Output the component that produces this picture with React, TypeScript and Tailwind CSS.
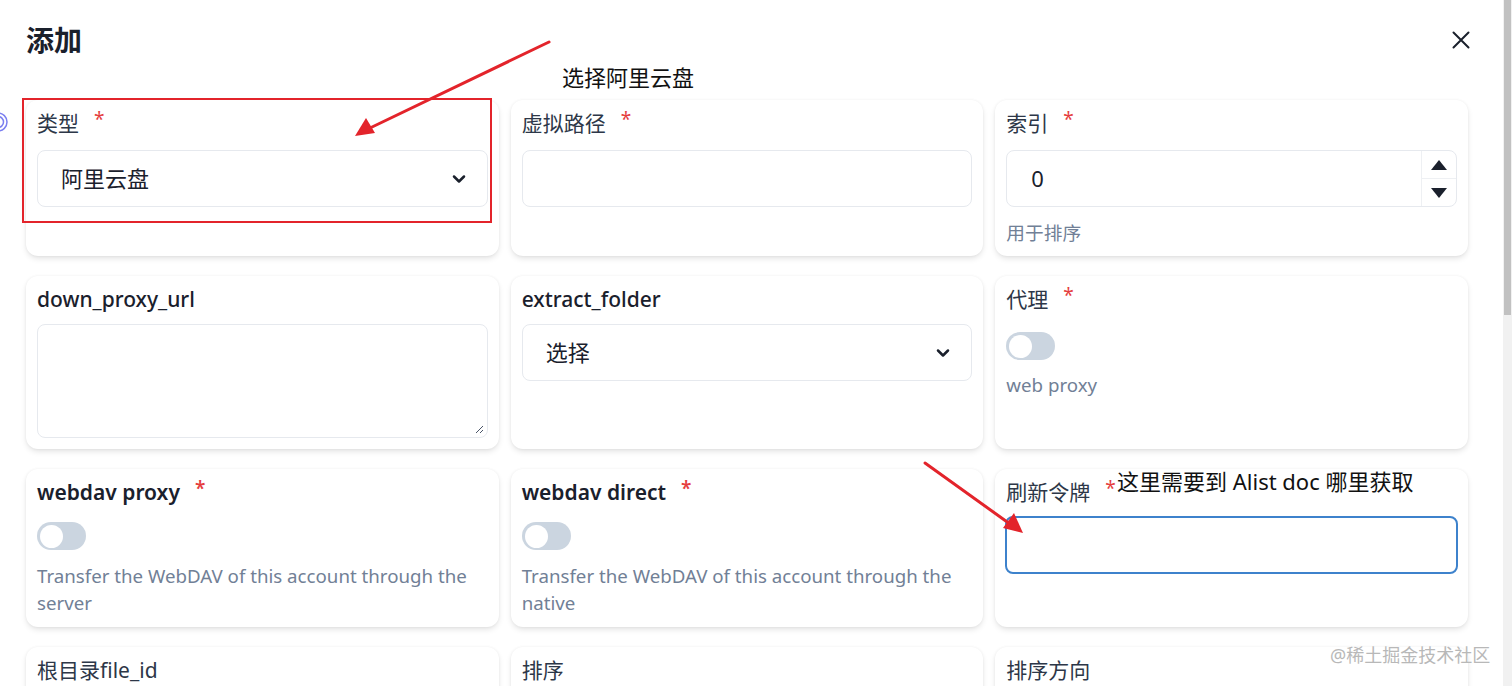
import React from "react";

const FONT = { fontFamily: '"Noto Sans", "Noto Sans CJK SC", sans-serif' };

function Star() {
  return <span className="ml-[15px] text-[19px] leading-none text-[#e53e3e] relative top-[-4px]">*</span>;
}

function Label({ text, star, en }: { text: string; star?: boolean; en?: "medium" | "semibold" }) {
  const w = en === "semibold" ? "font-semibold" : en === "medium" ? "font-medium" : "font-normal";
  return (
    <div className={`flex items-center h-[28px] text-[21px] leading-[28px] ${en ? "text-[#1a202c]" : "text-[#2d3748]"} ${w}`}>
      <span>{text}</span>
      {star && <Star />}
    </div>
  );
}

function Card({ children }: { children: React.ReactNode }) {
  return (
    <div className="bg-white rounded-[12px] px-[11px] pt-[9px] pb-[11px] flex flex-col shadow-[0_3px_6px_-1px_rgba(0,0,0,0.13),0_0_3px_rgba(0,0,0,0.05)]">
      {children}
    </div>
  );
}

function Chevron() {
  return (
    <svg width="20" height="20" viewBox="0 0 24 24" fill="none" stroke="#1a202c" strokeWidth="3" strokeLinecap="round" strokeLinejoin="round">
      <path d="M6 9l6 6 6-6" />
    </svg>
  );
}

function SelectBox({ value }: { value: string }) {
  return (
    <div className="mt-[13px] h-[57px] rounded-[8px] border border-[#e6e9ee] flex items-center justify-between pl-[23px] pr-[18px] text-[22px] text-[#1a202c]">
      <span>{value}</span>
      <Chevron />
    </div>
  );
}

function Toggle() {
  return (
    <div className="w-[49px] h-[28px] rounded-full bg-[#cbd5e0] flex items-center px-[3px]">
      <div className="w-[23px] h-[23px] rounded-full bg-white" />
    </div>
  );
}

function Helper({ children, lh = "leading-[27px]" }: { children: React.ReactNode; lh?: string }) {
  return <div className={`text-[18.7px] ${lh} text-[#718096]`}>{children}</div>;
}

export default function App() {
  return (
    <div className="relative w-[1512px] h-[686px] overflow-hidden bg-white flex" style={FONT}>
      <div className="flex-1 pl-[26px] pr-[35px]">
        <div className="pt-[22px] h-[58px] flex items-center justify-between">
          <h1 className="text-[28px] font-bold text-[#1a202c] leading-[36px]">添加</h1>
          <svg width="20" height="20" viewBox="0 0 20 20" className="mr-[-3px]" stroke="#1a202c" strokeWidth="2" strokeLinecap="round">
            <path d="M2.5 2.5l15 15M17.5 2.5l-15 15" />
          </svg>
        </div>
        <div className="mt-[42px] grid grid-cols-3 gap-x-[12px] gap-y-[20px]">
          {/* Row 1 */}
          <Card>
            <Label text="类型" star />
            <SelectBox value="阿里云盘" />
          </Card>
          <Card>
            <Label text="虚拟路径" star />
            <div className="mt-[13px] h-[57px] rounded-[8px] border border-[#e6e9ee]" />
          </Card>
          <Card>
            <Label text="索引" star />
            <div className="mt-[13px] h-[57px] rounded-[8px] border border-[#e6e9ee] flex text-[22px] text-[#1a202c]">
              <div className="flex-1 flex items-center pl-[24px]">0</div>
              <div className="w-[35px] border-l border-[#eef0f3] flex flex-col">
                <div className="flex-1 flex items-center justify-center border-b border-[#eef0f3]">
                  <svg width="16" height="10" viewBox="0 0 16 10"><path d="M8 0L16 10H0z" fill="#1a202c" /></svg>
                </div>
                <div className="flex-1 flex items-center justify-center">
                  <svg width="16" height="10" viewBox="0 0 16 10"><path d="M0 0H16L8 10z" fill="#1a202c" /></svg>
                </div>
              </div>
            </div>
            <div className="mt-[14px]">
              <Helper lh="leading-[24px]">用于排序</Helper>
            </div>
          </Card>

          {/* Row 2 */}
          <Card>
            <Label text="down_proxy_url" en="medium" />
            <div className="mt-[11px] h-[114px] rounded-[8px] border border-[#e6e9ee] relative">
              <svg width="10" height="10" viewBox="0 0 10 10" className="absolute right-[3px] bottom-[3px]" stroke="#4a5568" strokeWidth="1">
                <path d="M9 2L2 9M9 6L6 9" />
              </svg>
            </div>
          </Card>
          <Card>
            <Label text="extract_folder" en="medium" />
            <div className="-mt-[2px]">
              <SelectBox value="选择" />
            </div>
          </Card>
          <Card>
            <Label text="代理" star />
            <div className="mt-[19px]">
              <Toggle />
            </div>
            <div className="mt-[11px]">
              <Helper>web proxy</Helper>
            </div>
          </Card>

          {/* Row 3 */}
          <Card>
            <Label text="webdav proxy" star en="semibold" />
            <div className="mt-[16px]">
              <Toggle />
            </div>
            <div className="mt-[12px]">
              <Helper>Transfer the WebDAV of this account through the server</Helper>
            </div>
          </Card>
          <Card>
            <Label text="webdav direct" star en="semibold" />
            <div className="mt-[16px]">
              <Toggle />
            </div>
            <div className="mt-[12px]">
              <Helper>Transfer the WebDAV of this account through the native</Helper>
            </div>
          </Card>
          <Card>
            <Label text="刷新令牌" star />
            <div className="mt-[10px] h-[58px] rounded-[8px] border-2 border-[#3d82cc] ml-[-1px] mr-[-1px]" />
          </Card>

          {/* Row 4 */}
          <Card>
            <Label text="根目录file_id" />
            <div className="h-[60px]" />
          </Card>
          <Card>
            <Label text="排序" />
            <div className="h-[60px]" />
          </Card>
          <Card>
            <Label text="排序方向" />
            <div className="h-[60px]" />
          </Card>
        </div>
      </div>

      {/* scrollbar */}
      <div className="w-[9px] h-full bg-[#f1f1f1] flex flex-col">
        <div className="h-[315px] mx-[1px] bg-[#c1c1c1]" />
      </div>

      {/* left edge partial icon */}
      <svg width="10" height="24" viewBox="0 0 10 24" className="absolute left-0 top-[110px]" fill="none">
        <circle cx="-2" cy="12" r="9" stroke="#7b7ff0" strokeWidth="1.5" />
        <circle cx="-2" cy="12" r="5.5" stroke="#7b7ff0" strokeWidth="1.5" />
      </svg>

      {/* annotation overlays */}
      <div className="absolute left-[22px] top-[98px] w-[470px] h-[125px] border-2 border-[#e3242b] pointer-events-none" />
      <svg className="absolute left-0 top-0 pointer-events-none" width="1512" height="686" viewBox="0 0 1512 686">
        <line x1="549" y1="42" x2="370" y2="128" stroke="#e3242b" strokeWidth="3" strokeLinecap="round" />
        <path d="M355 136 L366 118 L375 133 Z" fill="#e3242b" />
        <line x1="925" y1="463" x2="1010" y2="524" stroke="#e3242b" strokeWidth="3" strokeLinecap="round" />
        <path d="M1023 533 L1003 528 L1014 513 Z" fill="#e3242b" />
      </svg>
      <div className="absolute left-[562px] top-[62px] text-[22px] leading-[30px] text-[#111]">选择阿里云盘</div>
      <div className="absolute left-[1117px] top-[466px] text-[22px] leading-[30px] text-[#111]">这里需要到 Alist doc 哪里获取</div>
      <div className="absolute left-[1330px] top-[643px] text-[18px] leading-[24px] text-[#b8b8b8]">@稀土掘金技术社区</div>
    </div>
  );
}
